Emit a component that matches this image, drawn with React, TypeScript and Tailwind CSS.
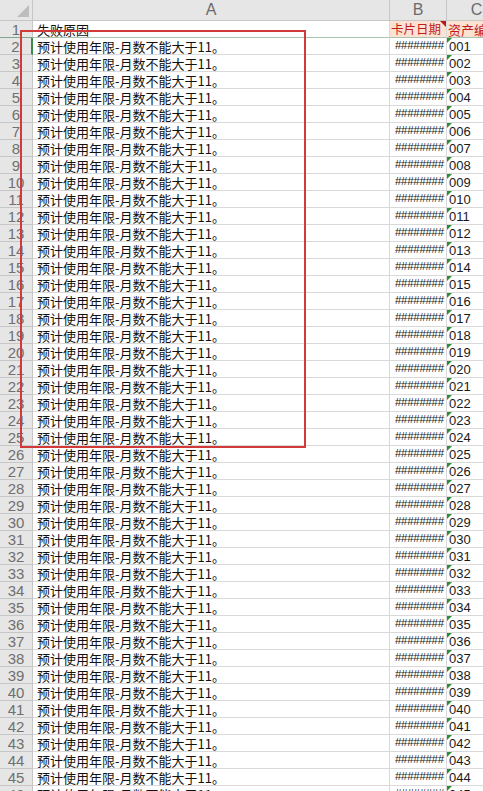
const rows = Array.from({ length: 46 }, (_, i) => i + 1);

const cjk = { fontFamily: '"Noto Sans CJK SC", "Liberation Sans", sans-serif' };
const latin = { fontFamily: '"Liberation Sans", "Noto Sans CJK SC", sans-serif' };

function ColHeader({ label }: { label: string }) {
  return (
    <div
      className="flex items-center justify-center border-r border-b border-[#c6c6c6] bg-[#e6e6e6] text-[16px] text-[#6b6b6b]"
      style={latin}
    >
      {label}
    </div>
  );
}

export default function App() {
  return (
    <div className="relative h-[791px] w-[483px] overflow-hidden bg-white">
      <div className="grid grid-cols-[33px_357px_57px_60px] grid-rows-[21px] auto-rows-[17px]">
        {/* corner */}
        <div className="relative border-r border-b border-[#c6c6c6] bg-[#e6e6e6]">
          <svg className="absolute right-[3px] bottom-[3px]" width="12" height="12" viewBox="0 0 12 12">
            <polygon points="12,0 12,12 0,12" fill="#bdbdbd" />
          </svg>
        </div>
        <ColHeader label="A" />
        <ColHeader label="B" />
        <ColHeader label="C" />

        {rows.map((n) => {
          const first = n === 1;
          const code = String(n - 1).padStart(3, "0");
          return [
            <div
              key={`h${n}`}
              className={`flex items-center justify-center border-r border-b bg-[#e6e6e6] text-[15px] leading-none text-[#707070] ${
                n === 2
                  ? "border-r-2 border-r-[#3c8a4c] border-b-[#c6c6c6]"
                  : first
                    ? "border-[#c6c6c6] border-b-[#7fa88a]"
                    : "border-[#c6c6c6]"
              }`}
              style={latin}
            >
              {n}
            </div>,
            <div
              key={`a${n}`}
              className={`flex items-center overflow-hidden border-r border-b border-[#d9d9d9] pl-[4px] text-[13px] leading-none whitespace-nowrap text-[#111] ${
                first ? "border-b-[#a9c4ae]" : ""
              }`}
              style={cjk}
            >
              {first ? "失败原因" : "预计使用年限-月数不能大于11。"}
            </div>,
            <div
              key={`b${n}`}
              className={`relative flex items-center overflow-hidden border-r border-b border-[#d9d9d9] leading-none whitespace-nowrap ${
                first
                  ? "bg-[#fbe2d3] pl-[1px] text-[12.5px] text-[#c41a1a] border-b-[#a9c4ae]"
                  : "pl-[5px] text-[11.5px] tracking-[-0.3px] text-[#1a1a1a]"
              }`}
              style={first ? cjk : latin}
            >
              {first ? "卡片日期" : "########"}
              {first && (
                <svg className="absolute top-0 right-0" width="6" height="6" viewBox="0 0 6 6">
                  <polygon points="0,0 6,0 6,6" fill="#c0141c" />
                </svg>
              )}
            </div>,
            <div
              key={`c${n}`}
              className={`relative flex items-center overflow-hidden border-b border-[#d9d9d9] text-[13px] leading-none whitespace-nowrap ${
                first ? "bg-[#fbe2d3] pl-[1px] text-[#c41a1a] border-b-[#a9c4ae]" : "pl-[2px] text-[#1a1a1a]"
              }`}
              style={first ? cjk : latin}
            >
              {first ? "资产编号" : code}
              {!first && (
                <svg className="absolute top-0 left-0" width="5" height="5" viewBox="0 0 5 5">
                  <polygon points="0,0 5,0 0,5" fill="#2e8b3a" />
                </svg>
              )}
            </div>,
          ];
        })}
      </div>

      {/* hand-drawn red highlight box */}
      <div className="pointer-events-none absolute top-[30px] left-[20px] h-[418px] w-[286px] border-2 border-[#d23a3a]" />
    </div>
  );
}
